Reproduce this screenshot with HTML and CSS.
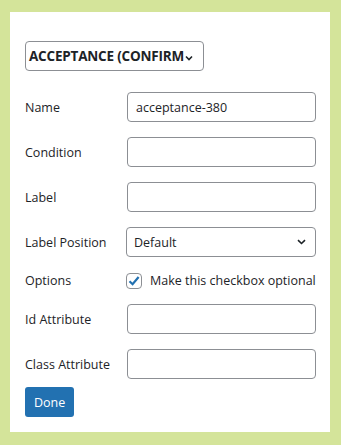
FILE: index.html
```html
<!DOCTYPE html>
<html lang="en">
<head>
    <meta charset="UTF-8">
    <meta name="viewport" content="width=device-width, initial-scale=1.0">
    <title>Field settings</title>
    <link rel="stylesheet" href="styles.css">
</head>
<body>
    <div class="panel">
        <div class="type-select">
            <span class="type-text">ACCEPTANCE (CONFIRM</span>
            <svg class="type-chev" width="8" height="6" viewBox="0 0 8 6"><path d="M1 1.5 L4 4.5 L7 1.5" fill="none" stroke="#1d2327" stroke-width="1.6"/></svg>
        </div>
        <div class="field-grid">
            <label class="field-label">Name</label>
            <div class="text-input">acceptance-380</div>

            <label class="field-label">Condition</label>
            <div class="text-input"></div>

            <label class="field-label">Label</label>
            <div class="text-input"></div>

            <label class="field-label">Label Position</label>
            <div class="select-input">
                <span>Default</span>
                <svg width="9" height="6" viewBox="0 0 9 6"><path d="M1 1.2 L4.5 4.5 L8 1.2" fill="none" stroke="#1d2327" stroke-width="1.6"/></svg>
            </div>

            <label class="field-label">Options</label>
            <div class="check-row">
                <span class="checkbox">
                    <svg width="14" height="14" viewBox="0 0 14 14"><path d="M2.5 7.2 L5.6 10.2 L11.6 3" fill="none" stroke="#2271b1" stroke-width="2.2"/></svg>
                </span>
                <span>Make this checkbox optional</span>
            </div>

            <label class="field-label">Id Attribute</label>
            <div class="text-input"></div>

            <label class="field-label">Class Attribute</label>
            <div class="text-input"></div>
        </div>
        <button class="done-btn">Done</button>
    </div>
</body>
</html>
```

FILE: styles.css
```css
* {
    margin: 0;
    padding: 0;
    box-sizing: border-box;
    font-family: 'Open Sans', 'Noto Sans', sans-serif;
}

body {
    background-color: #d4e49a;
    padding: 12px 11px 13px 10px;
    height: 445px;
}

.panel {
    background-color: #fff;
    height: 420px;
    padding: 29px 15px 14px 15px;
    color: #1d2327;
    font-size: 12.5px;
}

.type-select {
    position: relative;
    width: 179px;
    height: 30px;
    border: 1px solid #8c8f94;
    border-radius: 4px;
    display: flex;
    align-items: center;
    padding-left: 3px;
    overflow: hidden;
    white-space: nowrap;
}

.type-text {
    font-weight: bold;
    font-size: 13.5px;
    letter-spacing: -0.2px;
}

.type-chev {
    position: absolute;
    right: 10px;
    top: 13px;
    z-index: 1;
}

.field-grid {
    margin-top: 21px;
    display: grid;
    grid-template-columns: 102px 189px;
    row-gap: 15px;
    align-items: center;
}

.field-label {
    font-size: 12.5px;
    color: #1d2327;
    white-space: nowrap;
}

.text-input {
    height: 30px;
    border: 1px solid #8c8f94;
    border-radius: 4px;
    padding: 0 8px;
    display: flex;
    align-items: center;
}

.select-input {
    height: 30px;
    margin-left: -1px;
    border: 1px solid #8c8f94;
    border-radius: 4px;
    padding: 0 9px 0 7px;
    display: flex;
    align-items: center;
    justify-content: space-between;
}

.check-row {
    display: flex;
    align-items: center;
    gap: 8px;
    margin-left: -1px;
    white-space: nowrap;
}

.checkbox {
    width: 16px;
    height: 16px;
    border: 1px solid #8c8f94;
    border-radius: 4px;
    display: flex;
    align-items: center;
    justify-content: center;
}

.done-btn {
    margin-top: 8px;
    height: 30px;
    padding: 0 9px;
    background-color: #2271b1;
    color: #fff;
    border: none;
    border-radius: 3px;
    font-size: 12.5px;
    cursor: pointer;
}
```
